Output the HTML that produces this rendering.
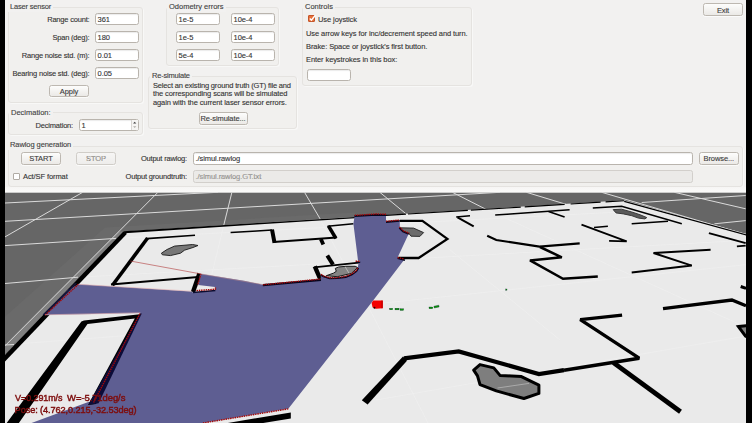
<!DOCTYPE html>
<html>
<head>
<meta charset="utf-8">
<style>
*{box-sizing:border-box;margin:0;padding:0}
html,body{width:752px;height:423px;overflow:hidden;background:#f2f1f0}
body{position:relative;font-family:"Liberation Sans",sans-serif;font-size:7.5px;color:#333;letter-spacing:-0.09px;-webkit-text-stroke:0.12px #3a3a3a}
.a{position:absolute}
.grp{position:absolute;border:1px solid #e5e3e0;border-radius:3px;background:#f1f0ee;box-shadow:1px 1px 0 #f8f8f7}
.lbl{position:absolute;white-space:nowrap;line-height:10px;height:10px;color:#333;margin-top:1px}
.gl{position:absolute;white-space:nowrap;line-height:10px;height:10px;color:#444;background:#f2f1f0;padding:0 2px;margin-top:1px;letter-spacing:0}
.r{text-align:right;letter-spacing:-0.19px}
.in{position:absolute;height:12px;border:1px solid #b9b4ad;border-radius:2.5px;background:#fff;line-height:10px;padding-top:1px;padding-left:1.6px;color:#333;white-space:nowrap;overflow:hidden;box-shadow:inset 0 1px 1px rgba(0,0,0,0.08)}
.in.dis{background:#ebeae8;border-color:#d2cfcb;color:#b4b1ad;box-shadow:none}
.btn{position:absolute;height:12px;border:1px solid #bdb8b1;border-radius:2.5px;background:linear-gradient(#fdfdfc,#ebe9e6);line-height:10px;padding-top:1px;text-align:center;color:#3c3c3c;white-space:nowrap;box-shadow:0 1px 0 rgba(255,255,255,0.7)}
.btn.dis{color:#aaa7a2;border-color:#d0cdc8;background:linear-gradient(#f6f5f4,#eeedeb)}
.cb{position:absolute;width:7px;height:7px;border:1px solid #b0aba4;border-radius:1px;background:#fff}
.cb.on{background:#e8703a;border-color:#c4562a}
.h13{height:13px;line-height:10px}
#bl{left:0;top:0;width:5px;height:423px;background:#000}
#br{left:746px;top:0;width:6px;height:423px;background:#000}
#strip{left:5px;top:187px;width:741px;height:6px;background:linear-gradient(#f6f5f4,#fbfbfa)}
#scene{left:5px;top:192px;width:741px;height:231px;filter:blur(0.3px)}
</style>
</head>
<body>
<!-- Laser sensor -->
<div class="grp" style="left:8px;top:7px;width:135px;height:96px"></div>
<div class="gl" style="left:8px;top:1px;letter-spacing:-0.2px">Laser sensor</div>
<div class="lbl r" style="left:10px;width:79.5px;top:14px">Range count:</div>
<div class="in" style="left:95px;top:13px;width:44px">361</div>
<div class="lbl r" style="left:10px;width:79.5px;top:32px">Span (deg):</div>
<div class="in" style="left:95px;top:31px;width:44px">180</div>
<div class="lbl r" style="left:10px;width:79.5px;top:50px">Range noise std. (m):</div>
<div class="in" style="left:95px;top:49px;width:44px">0.01</div>
<div class="lbl r" style="left:10px;width:79.5px;top:68px">Bearing noise std. (deg):</div>
<div class="in" style="left:95px;top:67px;width:44px">0.05</div>
<div class="btn" style="left:49px;top:85px;width:40px">Apply</div>

<!-- Decimation -->
<div class="grp" style="left:8px;top:112px;width:135px;height:23px"></div>
<div class="gl" style="left:9px;top:107px">Decimation:</div>
<div class="lbl r" style="left:10px;width:63px;top:120px">Decimation:</div>
<div class="in" style="left:79px;top:119px;width:60px">1</div>
<svg class="a" style="left:131px;top:120px" width="7" height="10" viewBox="0 0 7 10"><rect x="0" y="0" width="7" height="10" fill="#f6f5f3"/><line x1="0.5" y1="0" x2="0.5" y2="10" stroke="#dad7d3"/><path d="M2.1 3.6 L3.7 1.7 L5.3 3.6Z" fill="#3c3c3c"/><path d="M2.1 6.3 L3.7 8.1 L5.3 6.3Z" fill="#b0ada8"/></svg>

<!-- Odometry errors -->
<div class="grp" style="left:166px;top:7px;width:113px;height:59px"></div>
<div class="gl" style="left:167px;top:1px">Odometry errors</div>
<div class="in" style="left:176px;top:13px;width:44px">1e-5</div>
<div class="in" style="left:231px;top:13px;width:44px">10e-4</div>
<div class="in" style="left:176px;top:31px;width:44px">1e-5</div>
<div class="in" style="left:231px;top:31px;width:44px">10e-4</div>
<div class="in" style="left:176px;top:49px;width:44px">5e-4</div>
<div class="in" style="left:231px;top:49px;width:44px">10e-4</div>

<!-- Re-simulate -->
<div class="grp" style="left:148px;top:76px;width:149px;height:53px"></div>
<div class="gl" style="left:150px;top:69.5px;letter-spacing:-0.2px">Re-simulate</div>
<div class="lbl" style="left:153px;top:79.5px;letter-spacing:-0.16px">Select an existing ground truth (GT) file and</div>
<div class="lbl" style="left:153px;top:88px;letter-spacing:-0.11px">the corresponding scans will be simulated</div>
<div class="lbl" style="left:153px;top:96.5px;letter-spacing:-0.11px">again with the current laser sensor errors.</div>
<div class="btn h13" style="left:198.5px;top:111.6px;width:49px">Re-simulate...</div>

<!-- Controls -->
<div class="grp" style="left:302px;top:7px;width:170px;height:79px"></div>
<div class="gl" style="left:303px;top:1px">Controls</div>
<div class="cb on" style="left:308px;top:15px"></div>
<svg class="a" style="left:308px;top:14px" width="9" height="9" viewBox="0 0 9 9"><path d="M1.8 4.6 L3.4 6.3 L7.4 1.2" fill="none" stroke="#fff" stroke-width="1.4"/></svg>
<div class="lbl" style="left:318px;top:14px">Use joystick</div>
<div class="lbl" style="left:306px;top:28px">Use arrow keys for inc/decrement speed and turn.</div>
<div class="lbl" style="left:306px;top:41px">Brake: Space or joystick's first button.</div>
<div class="lbl" style="left:306px;top:54px">Enter keystrokes in this box:</div>
<div class="in" style="left:307px;top:69px;width:44px"></div>

<!-- Exit -->
<div class="btn" style="left:703px;top:3px;width:40px;height:13px;line-height:11px">Exit</div>

<!-- Rawlog generation -->
<div class="grp" style="left:8px;top:146px;width:735px;height:41px"></div>
<div class="gl" style="left:8px;top:139px;letter-spacing:-0.08px">Rawlog generation</div>
<div class="btn h13" style="left:21px;top:151.6px;width:40px">START</div>
<div class="btn dis h13" style="left:76px;top:151.6px;width:40px">STOP</div>
<div class="lbl r" style="left:100px;width:87px;top:153px">Output rawlog:</div>
<div class="in h13" style="left:193px;top:151.5px;width:500px">./simul.rawlog</div>
<div class="btn h13" style="left:698.5px;top:151.7px;width:40.5px">Browse...</div>
<div class="cb" style="left:13px;top:173px"></div>
<div class="lbl" style="left:23px;top:171px">Act/SF format</div>
<div class="lbl r" style="left:100px;width:87px;top:171px">Output groundtruth:</div>
<div class="in dis h13" style="left:193px;top:170px;width:500px">./simul.rawlog.GT.txt</div>

<div class="a" id="strip"></div>
<svg class="a" id="scene" viewBox="5 192 741 231" width="741" height="231">
<rect x="5" y="192" width="741" height="231" fill="#f8f8f7"/><rect x="5" y="192.7" width="741" height="231" fill="#666"/>
<!-- lighter ground band -->
<polygon points="105,227.5 355,212.5 355,217 124,231.3 5,355 5,316.7" fill="#6a6a6a"/>
<polygon points="119,231.5 123.2,231.4 5,355 5,346" fill="#808080"/>
<!-- ground grid -->
<g stroke="#dadada" stroke-width="1" fill="none">
<line x1="5" y1="203" x2="218" y2="192.3"/>
<line x1="5" y1="221.3" x2="500" y2="192.3"/>
<line x1="5" y1="245.6" x2="116" y2="238.4"/>
<line x1="5" y1="283.5" x2="78" y2="277.2"/>
<line x1="5" y1="345" x2="14" y2="344.5"/>
<line x1="82.7" y1="192.3" x2="5" y2="236.9"/>
<line x1="157.9" y1="192.3" x2="5" y2="345.8"/>
<line x1="231.9" y1="192.3" x2="223.8" y2="225"/>
<line x1="304.5" y1="192.3" x2="319.6" y2="218"/>
<line x1="379.8" y1="192.3" x2="406" y2="213.8"/>
<line x1="452.4" y1="192.3" x2="485" y2="208.8"/>
<line x1="526.4" y1="192.3" x2="566" y2="204.3"/>
<line x1="601.6" y1="192.3" x2="752" y2="236.3"/>
<line x1="674.3" y1="192.3" x2="745.7" y2="208.8"/>
<line x1="641.7" y1="202.5" x2="745.7" y2="195.5"/>
<line x1="714.4" y1="223.8" x2="745.7" y2="220.6"/>
</g>
<!-- map -->
<polygon points="123.2,231.4 624.2,200.3 752,235.5 752,423 5,423 5,355" fill="#eaeaea"/>
<!-- faint map grid -->
<g stroke="#efefef" stroke-width="0.8" fill="none">
<line x1="223.8" y1="225" x2="208" y2="290"/>
<line x1="319.6" y1="218" x2="350" y2="275"/>
<line x1="406" y1="213.8" x2="560" y2="340"/>
<line x1="485" y1="208.8" x2="752" y2="330"/>
<line x1="16" y1="344" x2="200" y2="330"/>
<line x1="118" y1="238.3" x2="658" y2="210"/>
<line x1="80.5" y1="277.1" x2="752" y2="240"/>
<line x1="376" y1="303.9" x2="752" y2="264"/>
<line x1="376" y1="400" x2="752" y2="335"/>
<line x1="366" y1="302" x2="428" y2="423"/>
</g>
<!-- outer border -->
<polygon points="123.2,231.4 127,233.8 5,361.6 5,354.7" fill="#000"/>
<polygon points="123.2,231.2 355,216.9 355,218.2 124.6,233.2" fill="#000"/>
<line x1="386" y1="215.4" x2="624" y2="200.7" stroke="#000" stroke-width="1.1" stroke-dasharray="20 2 60 3 50 4 40 6 30 5"/>
<line x1="624.2" y1="201.3" x2="752" y2="236.5" stroke="#000" stroke-width="1.3"/>

<!-- walls -->
<g stroke="#000" fill="none" stroke-linejoin="miter" stroke-miterlimit="2.2" stroke-linecap="butt">
<!-- room 1 -->
<polyline points="195,235.2 146.6,238.6" stroke-width="1.6"/>
<polyline points="147.6,238 112.5,285.2" stroke-width="3.6"/>
<polyline points="111,284.6 198.2,276.9" stroke-width="2"/>
<polyline points="199.4,273.5 193,292" stroke-width="4.4"/>
<!-- W2 -->
<polyline points="230.6,232.6 272,230.1" stroke-width="1.5"/>
<polyline points="272,229.5 274.5,242.8" stroke-width="4"/>
<polyline points="273.5,242.1 336.5,237.6" stroke-width="2"/>
<polyline points="335.9,238.4 328.4,225.8" stroke-width="3.6"/>
<polyline points="327.5,226.3 353.4,223.8" stroke-width="1.5"/>
<polyline points="320.8,238.9 323.3,244.6" stroke-width="3.8"/>
<polyline points="327.3,255.5 333,264.6" stroke-width="4"/>
<polyline points="359,262.6 314,267.4" stroke-width="1.8"/>
<polyline points="314.8,266.4 320.2,279" stroke-width="4.4"/>
<!-- arrow W6 -->
<polyline points="399.8,220.8 422.4,220.8 447.4,238.9 418.6,258 397.6,258" stroke-width="2.3"/>
<!-- W7 -->
<polyline points="456.2,217 470,215.8" stroke-width="1.4"/>
<polyline points="457.5,217.4 473.7,226.3" stroke-width="2"/>
<!-- W8 -->
<polyline points="495.2,215.1 569.6,209.7" stroke-width="1.5"/><polyline points="548.5,211.4 564.6,217.1" stroke-width="1.6"/>
<!-- W9 -->
<polyline points="487.2,235.8 496.3,240 539.5,246.6 579.7,243.3" stroke-width="2.2"/>
<!-- W10 -->
<polyline points="540,247 561.8,257.3 530,260.4 563,278.8 597.8,276.6" stroke-width="2.5"/>
<!-- W11 -->
<polyline points="592.8,208 621.6,206.3 681.8,223.8" stroke-width="1.5"/>
<polyline points="631.7,223.8 668,221.3" stroke-width="1.6"/>
<!-- W13 -->
<polyline points="581.5,224.6 626.7,241.4 609.1,240.9" stroke-width="1.8"/>
<polyline points="594,227.6 607.9,226.3" stroke-width="1.5"/>
<!-- W14 -->
<polyline points="710.6,249.8 653.5,253 691.8,265.6 631.7,272.4" stroke-width="2"/>
<!-- W15 -->
<polyline points="708.9,233.1 745.7,243.1" stroke-width="2"/>
<polyline points="736.9,246.4 745.7,245.6" stroke-width="1.8"/>
<polyline points="740.7,286.5 746,288.4" stroke-width="3"/>
<!-- W17 thick -->
<polygon points="361.8,400.2 367.6,404.6 407,360.8 403,356.6" fill="#000" stroke="none"/><polyline points="404,358.3 458.7,351.5 538.9,374 564,370.2" stroke-width="4.2"/>
<polyline points="564,370.2 639.2,358.2 580.3,319.6 622.1,315.1" stroke-width="3.4"/>
<polyline points="613.4,362.6 680.5,411.7" stroke-width="4.8"/>
<polyline points="663,308.6 731.9,300 746,305.8" stroke-width="3.3"/>
</g>
<!-- blobs -->
<polygon points="161.4,253.2 167,249.5 174.5,246.1 192.6,244.5 198,245.5 193,247.5 184.5,250.2 180.5,253.2 170.4,255.6 162.4,254.8" fill="#777" stroke="#1a1a1a" stroke-width="0.9"/>
<polygon points="335.3,268.4 338.6,267 345.7,266.3 355.2,266.3 357.6,267.5 351.4,273.4 337.2,276.7 326.3,275.7 333.4,273.2 336.3,271.3" fill="#848484" stroke="#1a1a1a" stroke-width="1" stroke-linejoin="round"/><line x1="345.3" y1="267" x2="349" y2="273.2" stroke="#d8d8d8" stroke-width="0.6"/>
<polygon points="400.5,227.8 413.6,228.1 423.6,232.6 419.9,236.4 411,236.2 408.6,233.1 401,231.4" fill="#6c6c6c" stroke="#222" stroke-width="0.9"/>
<polygon points="613.2,209.6 621.6,209.2 631.8,212 640.2,214.8 646.8,217.6 644.9,218.9 638.4,218.1 631.8,215.7 623.4,213.9 616,212.9" stroke-linejoin="round" fill="#5a5a5a" stroke="#3a3a3a" stroke-width="1"/>
<polygon points="473.7,370.1 480,364.6 493.8,367.9 500,375.4 521.4,376.6 538.9,385.2 538.9,393.4 523.9,398.5 496.3,390.9 480,384.7 477.5,375.9" fill="#7e7e7e" stroke="#000" stroke-width="3" stroke-linejoin="round"/>
<line x1="497.5" y1="388" x2="529" y2="383.4" stroke="#bdbdbd" stroke-width="0.7"/>
<polygon points="738.5,326.6 752,325 752,340 745.5,336" fill="#808080" stroke="#000" stroke-width="3"/>

<!-- blue scan -->
<polygon points="78.3,284.3 191.4,291.4 193.2,292.8 215.2,290.6 215.2,287 198.2,285.1 200.1,273.8 244,280.7 263.2,284.8 320.8,279 320.7,274.5 323.5,275.8 329.7,277.7 337.2,277.5 345.7,276.3 351.4,274 356.1,270.6 357.8,267.5 358.5,263.2 359.9,262.3 359.9,261 358,260.4 353.4,223.8 354.7,215.4 376,214 386,214.3 386,221.3 399.8,220 399.8,227.6 408.6,233.9 397.6,257.5 404,260 372,302 288.3,408.7 203,423 31.5,423 89,401.8 95.2,403.5 140.4,313 45.1,315 67.7,290" fill="#5e5e92"/>
<!-- room 2 walls -->
<g fill="#000">
<polygon points="81.4,321.5 84,320.6 139.8,314.2 140.6,313.3 96,404 88,405 134.8,318.4 87.5,324 18.9,423 6.7,423"/>
<polygon points="290.8,412.4 290.8,418.5 263.2,423 227.8,423"/>
</g>
<!-- wedge dark edge -->
<line x1="193" y1="292.4" x2="215.4" y2="290.6" stroke="#0c0c30" stroke-width="1.5"/>
<g stroke="#05051e" fill="none">
<polyline points="262.8,285.2 321,280" stroke-width="2.2"/>
<polyline points="321,275 323.5,276.6 329.7,278.5 337.2,278.3 345.7,277.1 351.6,274.8 356.5,271.3 358.4,268" stroke-width="1.6"/><polyline points="356,262 360.2,262.2" stroke-width="1.4"/>
<polyline points="354.4,216.2 376,214.8 386,215.1" stroke-width="1.8"/>
<polyline points="386,222 399.6,220.8" stroke-width="1.8"/><polyline points="399.4,227.8 403,231.6 408.8,234" stroke-width="1.8"/>
<polyline points="397.6,258.2 405,260.3" stroke-width="1.6"/>
</g>
<polygon points="139.8,313.4 141.8,313.6 98.6,403.2 88.4,405 91,400" fill="#0c0c38"/>
<polygon points="77,283.2 75,283 42.6,314.6 45.1,315.6" fill="#14143a"/>
<!-- red scan dots -->
<g stroke="#a40808" stroke-width="1.4" fill="none" stroke-dasharray="1.5 0.8">
<polyline points="78.3,284.3 45.1,315"/>
<polyline points="139.9,313.6 93.6,402.5"/>
<polyline points="201,273.8 197.6,285"/>
<polyline points="196.5,290.6 215.4,289.2 215.4,287"/>
<polyline points="263.2,284.8 320.8,279"/><polyline points="321,274.4 323.5,275.9 329.7,277.8 337.2,277.6 345.7,276.4 351.4,274.1 356.1,270.7 357.8,267.5"/><polyline points="355.6,261.2 360,261.3"/>
<polyline points="354.7,215.4 376,214 386,214.3"/>
<polyline points="386,221.3 399.8,220"/><polyline points="399.4,227 403.4,230.8 409.4,233.4"/>
<polyline points="397.6,257.5 404,259"/>
<polyline points="288.3,408.9 203,423"/>
</g>
<line x1="130.3" y1="261" x2="200.1" y2="273.8" stroke="#b03a3a" stroke-width="0.6"/>
<line x1="200.1" y1="273.8" x2="263" y2="284.6" stroke="#c08a8a" stroke-width="0.5"/>
<line x1="78.3" y1="284.3" x2="191.4" y2="291.2" stroke="#e6b0b0" stroke-width="0.6"/>
<line x1="45.1" y1="314.8" x2="140.4" y2="312.8" stroke="#e6b0b0" stroke-width="0.6"/>
<!-- robot -->
<path d="M373.2,300.4 L382.7,300.4 L382.7,308.2 L376,308.8 L372.6,307.6 L371.6,303 Z" fill="#f40000"/><rect x="381.3" y="300.6" width="1.5" height="7.6" fill="#c80000"/><circle cx="374.5" cy="307.8" r="1" fill="#200"/>
<g fill="#0a960a" stroke="#022" stroke-width="0.3">
<rect x="389.6" y="308.3" width="3.2" height="1.5"/><rect x="395" y="308.2" width="4" height="1.7"/><rect x="400" y="308.8" width="3.6" height="1.6"/>
<rect x="429" y="307" width="3.8" height="1.7"/><rect x="434" y="305.8" width="5" height="1.8" transform="rotate(-12 436 306.7)"/>
<rect x="505.8" y="289" width="1.2" height="1.2"/>
</g>
<g font-family="Liberation Sans, sans-serif" font-size="9.4" fill="#7e0e0e" stroke="#7e0e0e" stroke-width="0.45">
<text x="15.1" y="401.2" textLength="47.3" lengthAdjust="spacingAndGlyphs">V=0.291m/s</text><text x="67.1" y="401.2" textLength="58.2" lengthAdjust="spacingAndGlyphs">W=-5.71deg/s</text>
<text x="14.6" y="413.4" textLength="122" lengthAdjust="spacingAndGlyphs">Pose: (4.762,0.215,-32.53deg)</text>
</g>
</svg>
<div class="a" id="bl"></div>
<div class="a" id="br"></div>
</body>
</html>
